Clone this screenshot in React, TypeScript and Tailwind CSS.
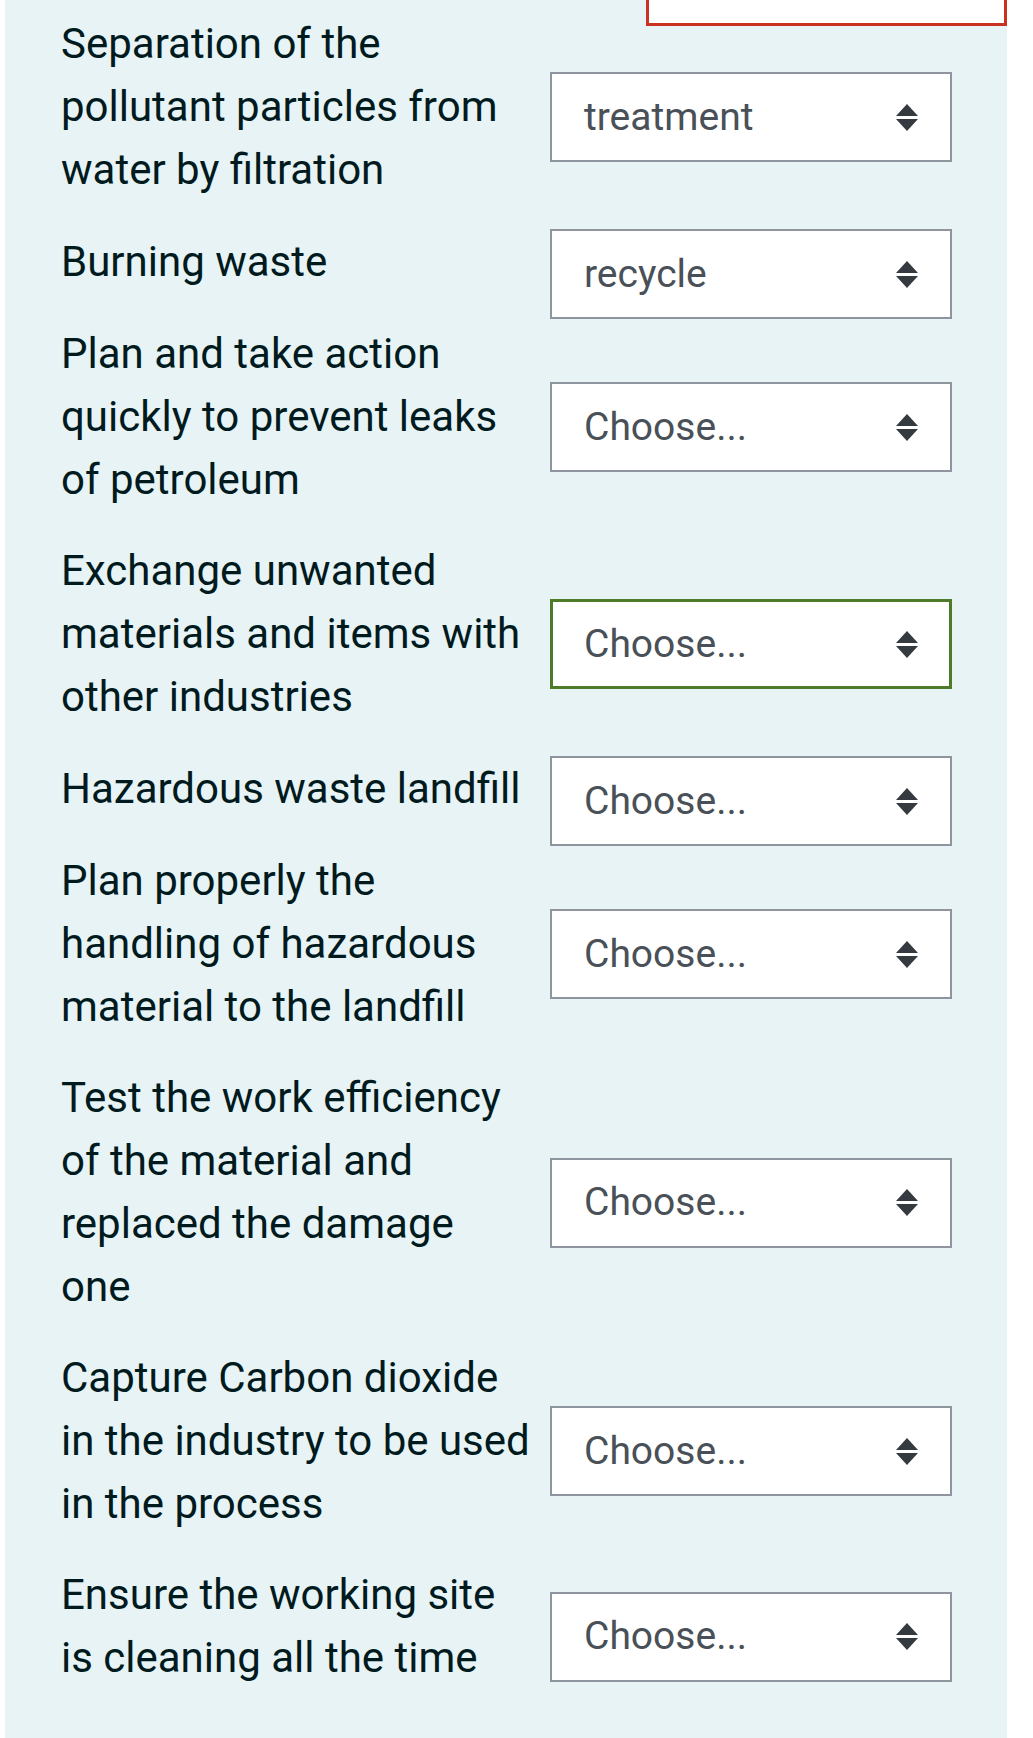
import React from "react";

type Row = { lines: string[]; value: string; green?: boolean };

const rows: Row[] = [
  { lines: ["Separation of the", "pollutant particles from", "water by filtration"], value: "treatment" },
  { lines: ["Burning waste"], value: "recycle" },
  { lines: ["Plan and take action", "quickly to prevent leaks", "of petroleum"], value: "Choose..." },
  { lines: ["Exchange unwanted", "materials and items with", "other industries"], value: "Choose...", green: true },
  { lines: ["Hazardous waste landfill"], value: "Choose..." },
  { lines: ["Plan properly the", "handling of hazardous", "material to the landfill"], value: "Choose..." },
  { lines: ["Test the work efficiency", "of the material and", "replaced the damage", "one"], value: "Choose..." },
  { lines: ["Capture Carbon dioxide", "in the industry to be used", "in the process"], value: "Choose..." },
  { lines: ["Ensure the working site", "is cleaning all the time"], value: "Choose..." },
];

function Arrows() {
  return (
    <svg width="22" height="27" viewBox="0 0 22 27" className="shrink-0">
      <polygon points="0,12 11,0 22,12" fill="#343a40" />
      <polygon points="0,15 22,15 11,27" fill="#343a40" />
    </svg>
  );
}

function Select({ value, green, single }: { value: string; green?: boolean; single: boolean }) {
  const base = "flex h-[90px] w-[402px] shrink-0 items-center justify-between bg-white";
  const border = green
    ? "border-[3px] border-[#4f7a28] pl-[31px] pr-[31px]"
    : "border-2 border-[#8f959e] pl-[32px] pr-[32px]";
  const margin = single ? "mb-[3px]" : "mb-[7px]";
  return (
    <div className={`${base} ${border} ${margin}`}>
      <span className="text-[39px] leading-none text-[#495057]">{value}</span>
      <Arrows />
    </div>
  );
}

export default function App() {
  return (
    <div className="min-h-[1738px] bg-white" style={{ fontFamily: "Roboto, 'Noto Sans', sans-serif" }}>
      <div className="relative ml-[5px] min-h-[1738px] w-[1002px] bg-[#e7f3f5] pl-[56px] pt-[12px]">
        <div className="absolute right-0 top-0 h-[26px] w-[361px] border-[3px] border-t-0 border-[#ca3120] bg-white" />
        {rows.map((r, i) => (
          <div key={i} className="flex items-center">
            <div className="w-[489px] shrink-0 pb-[28px] text-[42px] leading-[63px] text-[#001a1e]">
              {r.lines.map((l, j) => (
                <div key={j} className="whitespace-nowrap">
                  {l}
                </div>
              ))}
            </div>
            <Select value={r.value} green={r.green} single={r.lines.length === 1} />
          </div>
        ))}
      </div>
    </div>
  );
}
